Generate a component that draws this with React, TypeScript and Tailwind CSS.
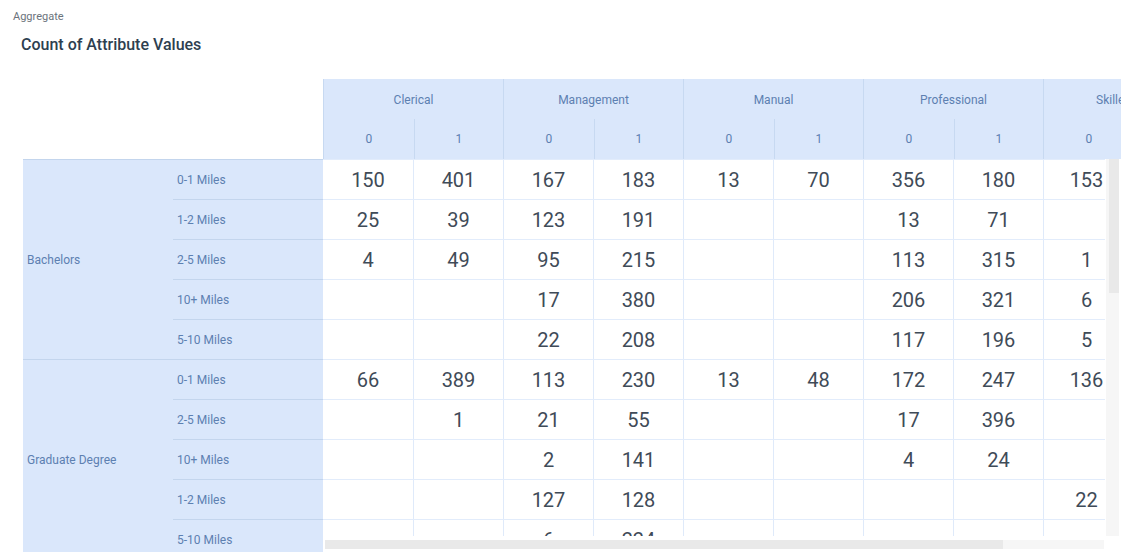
const groups = ['Clerical', 'Management', 'Manual', 'Professional', 'Skilled'];

const rowGroups = [
    {
        name: 'Bachelors',
        rows: [
            { label: '0-1 Miles', values: ['150', '401', '167', '183', '13', '70', '356', '180', '153'] },
            { label: '1-2 Miles', values: ['25', '39', '123', '191', '', '', '13', '71', ''] },
            { label: '2-5 Miles', values: ['4', '49', '95', '215', '', '', '113', '315', '1'] },
            { label: '10+ Miles', values: ['', '', '17', '380', '', '', '206', '321', '6'] },
            { label: '5-10 Miles', values: ['', '', '22', '208', '', '', '117', '196', '5'] },
        ],
    },
    {
        name: 'Graduate Degree',
        rows: [
            { label: '0-1 Miles', values: ['66', '389', '113', '230', '13', '48', '172', '247', '136'] },
            { label: '2-5 Miles', values: ['', '1', '21', '55', '', '', '17', '396', ''] },
            { label: '10+ Miles', values: ['', '', '2', '141', '', '', '4', '24', ''] },
            { label: '1-2 Miles', values: ['', '', '127', '128', '', '', '', '', '22'] },
            { label: '5-10 Miles', values: ['', '', '6', '224', '', '', '', '', ''] },
        ],
    },
];

const allRows = rowGroups.flatMap((g) => g.rows);

const App = () => {
    return (
        <div className="w-[1127px] h-[555px] overflow-hidden bg-white font-['Roboto',sans-serif]">
            <div className="pl-[13px] pt-[9px] text-[11px] leading-4 text-[#6b737c]">Aggregate</div>
            <div className="pl-[21px] mt-[10px] text-[16px] leading-5 font-medium text-[#2e3f50]">
                Count of Attribute Values
            </div>

            <div className="ml-[23px] mt-[24px] w-[1098px]">
                {/* column headers */}
                <div className="flex h-[80px]">
                    <div className="w-[300px] shrink-0 bg-white" />
                    <div className="flex w-[798px] overflow-hidden bg-[#dae7fb]">
                        {groups.map((group, gi) => (
                            <div key={group} className="w-[180px] shrink-0 border-l border-[#c7d9f1] flex flex-col">
                                <div
                                    className={
                                        gi === 4
                                            ? 'h-[40px] flex items-center pt-[1px] pl-[52px] text-[12px] text-[#5d80b1] whitespace-nowrap'
                                            : 'h-[40px] flex items-center justify-center pt-[1px] text-[12px] text-[#5d80b1]'
                                    }
                                >
                                    {group}
                                </div>
                                <div className="h-[40px] flex">
                                    <div className="w-[90px] flex items-center justify-center text-[12px] text-[#5d80b1]">0</div>
                                    <div className="w-[90px] border-l border-[#c7d9f1] flex items-center justify-center text-[12px] text-[#5d80b1]">1</div>
                                </div>
                            </div>
                        ))}
                    </div>
                </div>

                {/* body */}
                <div className="flex">
                    <div className="w-[300px] h-[393px] shrink-0 overflow-hidden bg-[#dae7fb]">
                        {rowGroups.map((g) => (
                            <div key={g.name} className="flex">
                                <div className="w-[150px] shrink-0 border-t border-[#c3d5ed] flex items-center pl-[4px] text-[12px] text-[#5d80b1]">
                                    {g.name}
                                </div>
                                <div className="w-[150px]">
                                    {g.rows.map((r) => (
                                        <div key={r.label} className="h-[40px] border-t border-[#c3d5ed] flex items-center pl-[4px] text-[12px] text-[#5d80b1]">
                                            {r.label}
                                        </div>
                                    ))}
                                </div>
                            </div>
                        ))}
                    </div>

                    <div className="w-[798px] flex flex-col">
                        <div className="flex">
                            <div className="w-[782px] h-[377px] overflow-hidden">
                                {allRows.map((r, ri) => (
                                    <div key={ri} className="flex h-[40px] border-t border-[#e2ecfb]">
                                        {r.values.map((v, ci) => (
                                            <div
                                                key={ci}
                                                className={
                                                    ci === 0
                                                        ? 'w-[90px] shrink-0 flex items-center justify-center text-[20px] text-[#3f4b58]'
                                                        : ci === 8
                                                          ? 'w-[86px] shrink-0 border-l border-[#dfeafa] flex items-center justify-center text-[20px] text-[#3f4b58]'
                                                          : 'w-[90px] shrink-0 border-l border-[#dfeafa] flex items-center justify-center text-[20px] text-[#3f4b58]'
                                                }
                                            >
                                                {v}
                                            </div>
                                        ))}
                                        <div className="w-[90px] shrink-0" />
                                    </div>
                                ))}
                            </div>
                            <div className="w-[16px] h-[377px] bg-white pl-[1px]">
                                <div className="w-[13px] h-full bg-[#f6f6f6] pl-[3px]">
                                    <div className="w-[10px] h-[134px] bg-[#e9e9e9]" />
                                </div>
                            </div>
                        </div>
                        <div className="h-[16px] pt-[4px] pl-[2px]">
                            <div className="w-[779px] h-[9px] bg-[#f6f6f6]">
                                <div className="w-[678px] h-full bg-[#e9e9e9]" />
                            </div>
                        </div>
                    </div>
                </div>
            </div>
        </div>
    );
};

export default App;
